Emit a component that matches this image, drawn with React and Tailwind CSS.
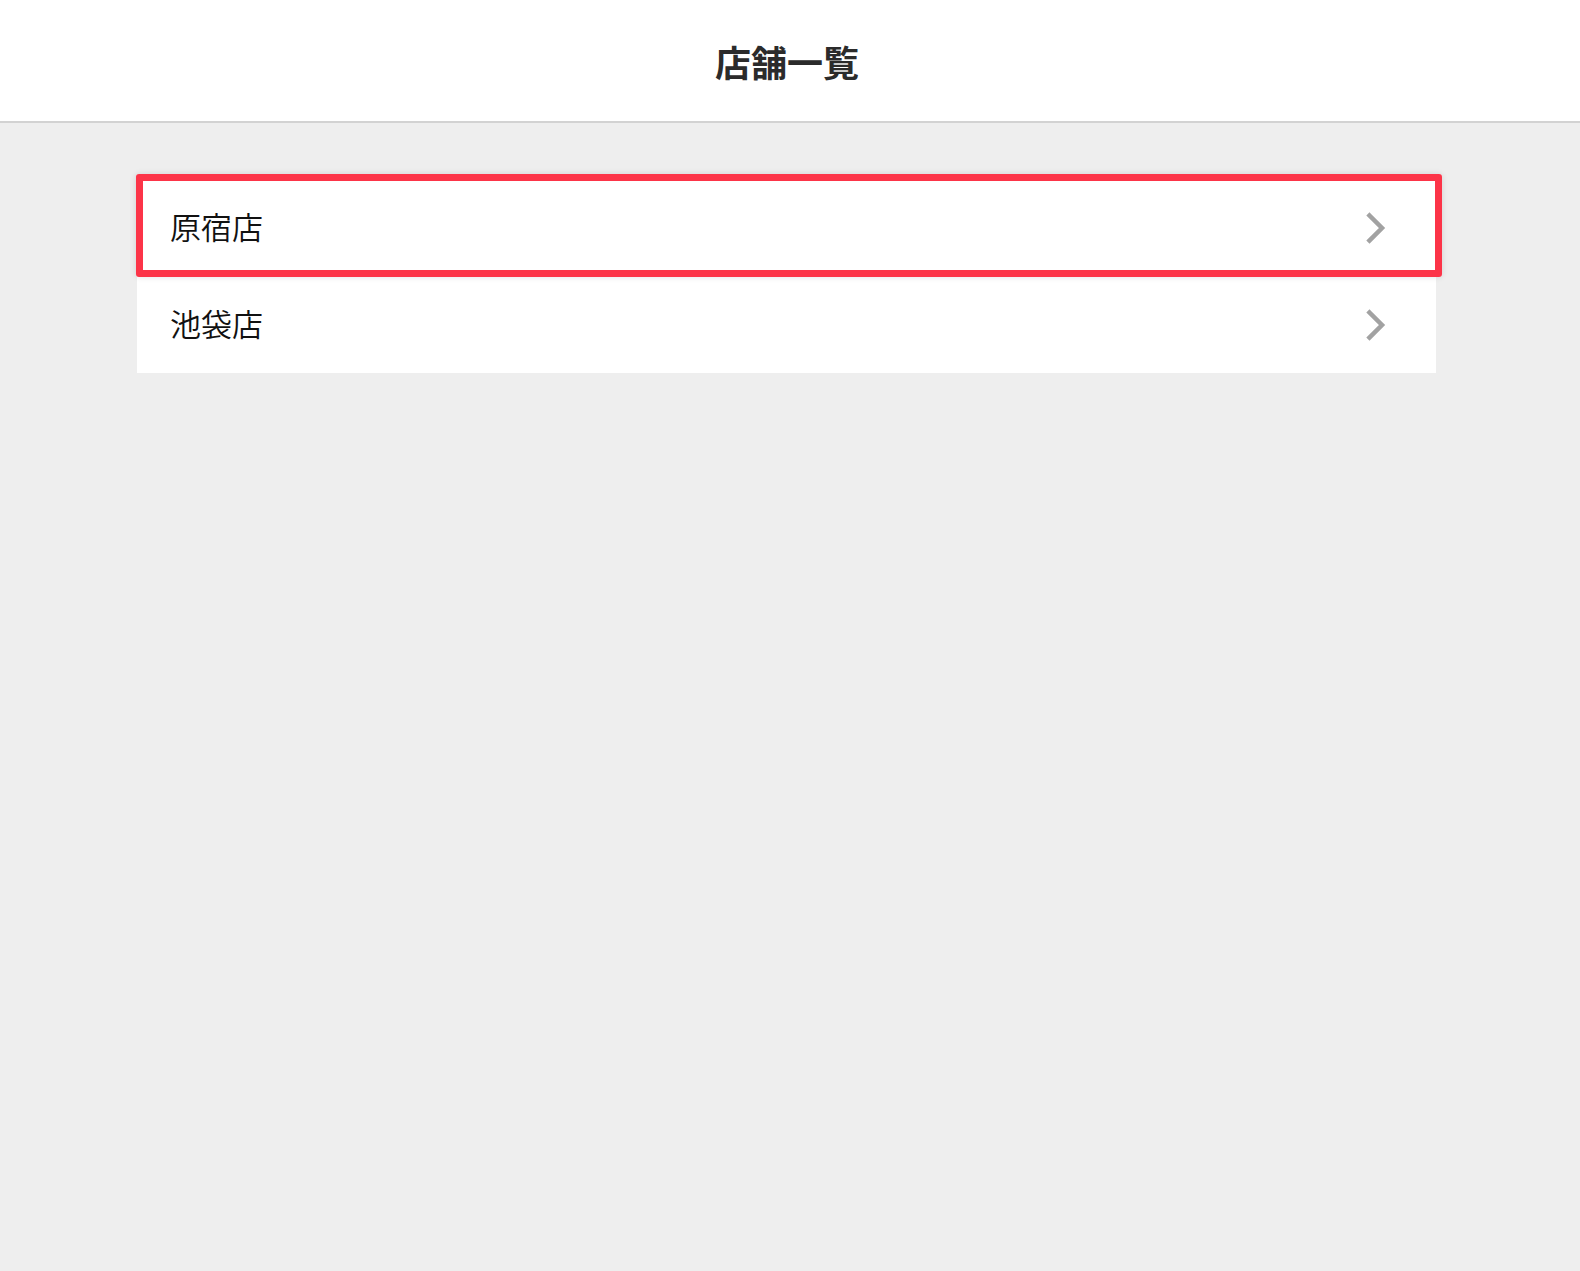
import React from 'react';

const STORES = [
  { id: 'harajuku', name: '原宿店' },
  { id: 'ikebukuro', name: '池袋店' },
];

const Chevron = () => (
  <svg width="20" height="32" viewBox="0 0 20 32" fill="none" className="shrink-0">
    <path d="M3.5 3.5 L16 16 L3.5 28.5" stroke="#a2a2a2" strokeWidth="4.5" strokeLinecap="square" />
  </svg>
);

export default function App() {
  return (
    <div
      className="relative min-h-[1271px] bg-[#eeeeee]"
      style={{ fontFamily: '"Noto Sans CJK JP", "Noto Sans", sans-serif' }}
    >
      {/* Header */}
      <header className="h-[123px] bg-white border-b-2 border-[#d2d2d2] flex items-center justify-center pr-[6px]">
        <h1 className="text-[36px] font-bold text-[#2b2b2b] leading-none">店舗一覧</h1>
      </header>

      {/* Store list */}
      <ul className="ml-[137px] w-[1299px] mt-[56px] bg-white">
        {STORES.map((store) => (
          <li
            key={store.id}
            className="h-[97px] flex items-center justify-between pl-[33px] pr-[50px] cursor-pointer"
          >
            <span className="text-[31px] font-[350] text-[#111111] leading-none mb-[5px]">{store.name}</span>
            <Chevron />
          </li>
        ))}
      </ul>

      {/* Highlight on first row */}
      <div className="absolute left-[136px] top-[174px] w-[1306px] h-[103px] border-[7px] border-[#fc3448] rounded-[3px] shadow-[0_0_6px_rgba(0,0,0,0.12)] pointer-events-none" />
    </div>
  );
}
